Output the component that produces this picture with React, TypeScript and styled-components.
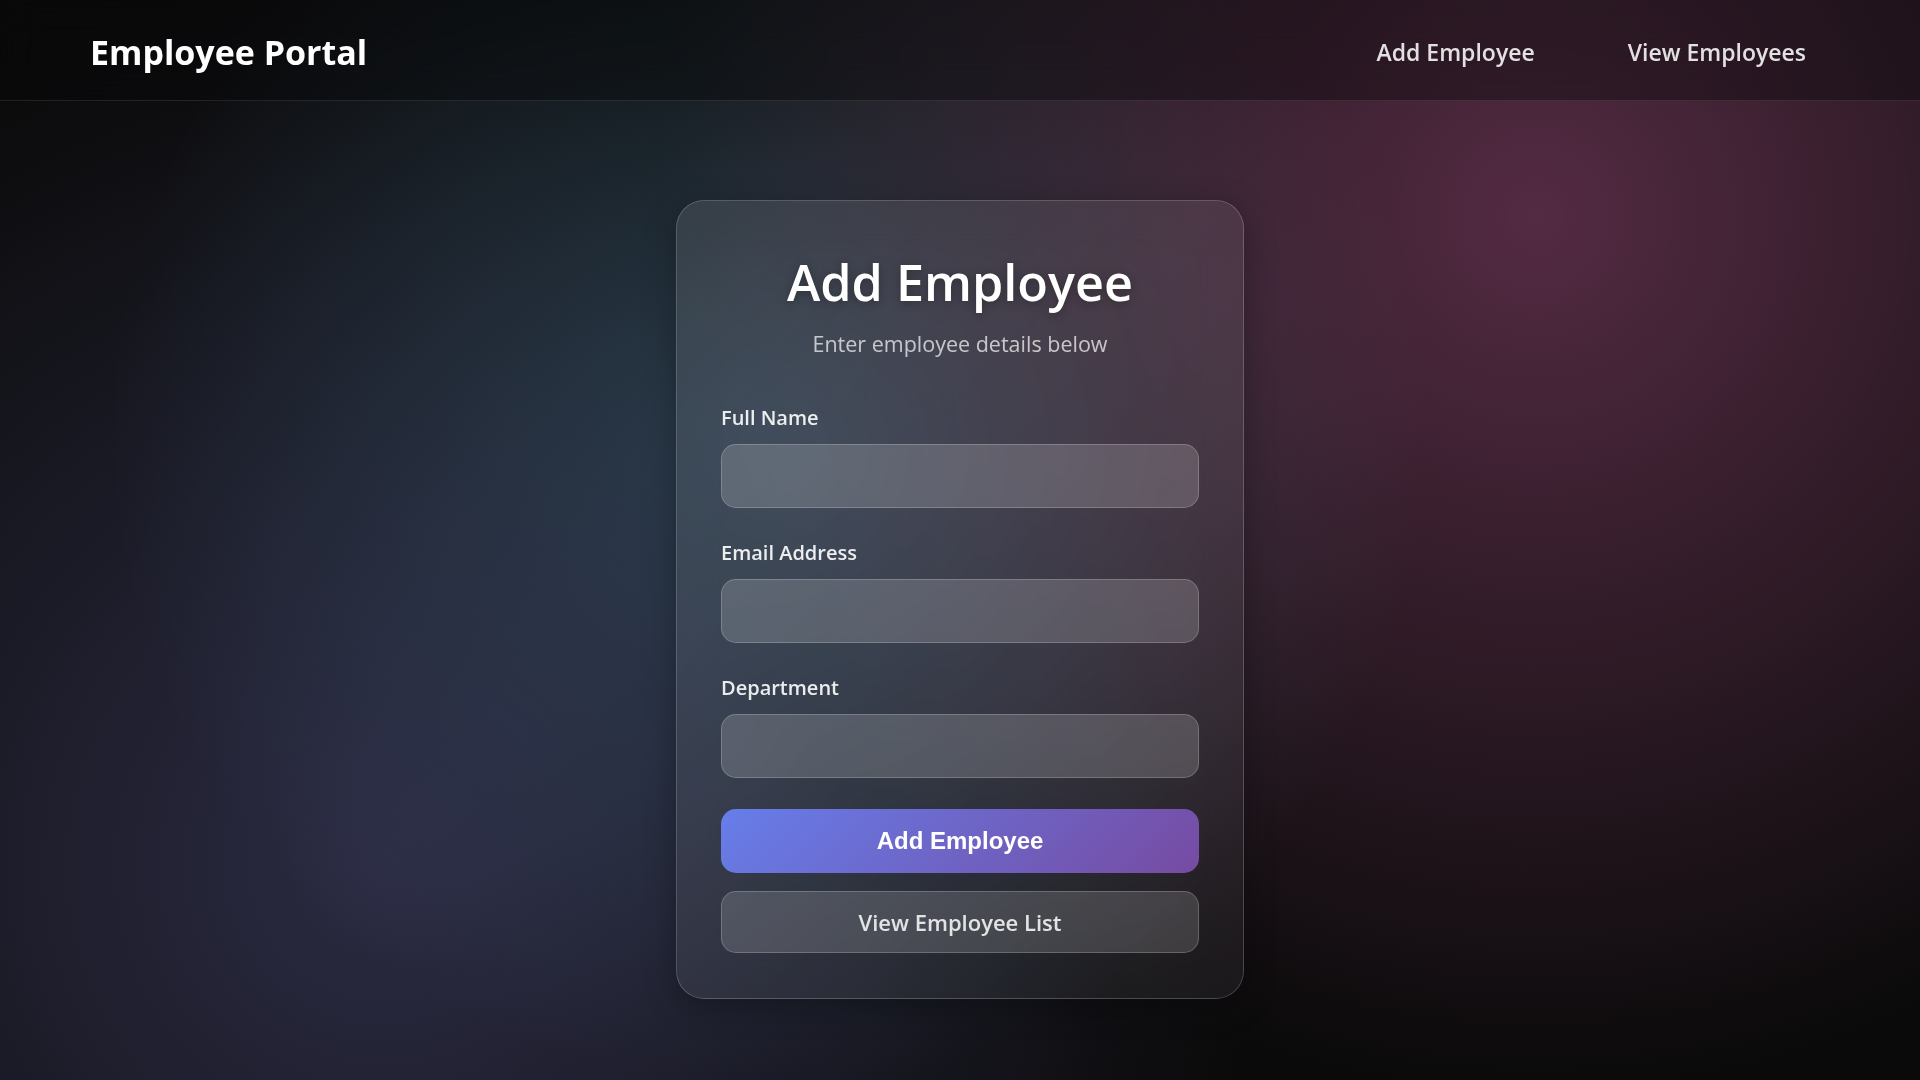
import React from "react";
import styled, { createGlobalStyle } from "styled-components";

const GlobalStyle = createGlobalStyle`
  *, *::before, *::after { box-sizing: border-box; }
  html, body { margin: 0; padding: 0; }
  body {
    font-family: "Open Sans", "Noto Sans", sans-serif;
    background: #0a0a0a;
    color: #ffffff;
  }
`;

const Page = styled.div`
  min-height: 100vh;
  display: flex;
  flex-direction: column;
  background:
    radial-gradient(circle at 20% 80%, rgba(120, 119, 198, 0.3) 0%, transparent 50%),
    radial-gradient(circle at 80% 20%, rgba(255, 119, 198, 0.3) 0%, transparent 50%),
    radial-gradient(circle at 40% 40%, rgba(120, 219, 255, 0.2) 0%, transparent 50%),
    #0a0a0a;
`;

const Header = styled.header`
  height: 101px;
  display: flex;
  align-items: center;
  justify-content: space-between;
  padding: 5px 90px 0;
  background: rgba(8, 8, 10, 0.4);
  backdrop-filter: blur(20px);
  border-bottom: 1px solid rgba(255, 255, 255, 0.1);
`;

const Brand = styled.div`
  font-size: 34px;
  font-weight: 700;
  color: #ffffff;
  line-height: 1.2;
`;

const Nav = styled.nav`
  display: flex;
  align-items: center;
  gap: 45px;
`;

const NavLink = styled.a`
  padding: 10px 24px;
  font-size: 23px;
  font-weight: 600;
  color: rgba(255, 255, 255, 0.87);
  text-decoration: none;
  line-height: 1.3;
`;

const Main = styled.main`
  flex: 1;
  display: flex;
  justify-content: center;
  align-items: flex-start;
  padding-top: 99px;
`;

const Card = styled.section`
  width: 568px;
  padding: 50px 44px 45px;
  border: 1px solid rgba(255, 255, 255, 0.18);
  border-radius: 28px;
  background: linear-gradient(135deg, rgba(255, 255, 255, 0.1) 0%, rgba(255, 255, 255, 0.05) 100%);
  backdrop-filter: blur(20px);
  box-shadow: 0 8px 32px rgba(0, 0, 0, 0.3);
`;

const Title = styled.h1`
  margin: 0;
  font-size: 50.3px;
  font-weight: 600;
  line-height: 62px;
  text-align: center;
  color: #ffffff;
  text-shadow: 0 2px 10px rgba(0, 0, 0, 0.3);
`;

const Subtitle = styled.p`
  margin: 16px 0 45px;
  font-size: 21.5px;
  line-height: 1.4;
  text-align: center;
  color: rgba(255, 255, 255, 0.7);
`;

const Form = styled.form`
  display: flex;
  flex-direction: column;
  gap: 31px;
`;

const Field = styled.div`
  display: flex;
  flex-direction: column;
  gap: 12px;
`;

const Label = styled.label`
  font-size: 20px;
  font-weight: 600;
  line-height: 28px;
  color: rgba(255, 255, 255, 0.9);
`;

const Input = styled.input`
  height: 64px;
  width: 100%;
  padding: 0 20px;
  border: 1px solid rgba(255, 255, 255, 0.2);
  border-radius: 15px;
  background: rgba(255, 255, 255, 0.17);
  color: #ffffff;
  font-family: inherit;
  font-size: 20px;
  outline: none;
`;

const Actions = styled.div`
  display: flex;
  flex-direction: column;
  gap: 18px;
`;

const PrimaryButton = styled.button`
  height: 64px;
  width: 100%;
  border: none;
  border-radius: 15px;
  background: linear-gradient(135deg, #667eea 0%, #764ba2 100%);
  color: #ffffff;
  font-family: "Liberation Sans", Arial, sans-serif;
  font-size: 24px;
  font-weight: 700;
  cursor: pointer;
`;

const SecondaryButton = styled.a`
  height: 62px;
  display: flex;
  align-items: center;
  justify-content: center;
  border: 1px solid rgba(255, 255, 255, 0.2);
  border-radius: 15px;
  background: rgba(255, 255, 255, 0.15);
  color: rgba(255, 255, 255, 0.85);
  font-size: 22px;
  font-weight: 600;
  text-decoration: none;
`;

export default function App() {
  return (
    <>
      <GlobalStyle />
      <Page>
        <Header>
          <Brand>Employee Portal</Brand>
          <Nav>
            <NavLink href="#">Add Employee</NavLink>
            <NavLink href="#">View Employees</NavLink>
          </Nav>
        </Header>
        <Main>
          <Card>
            <Title>Add Employee</Title>
            <Subtitle>Enter employee details below</Subtitle>
            <Form onSubmit={(e) => e.preventDefault()}>
              <Field>
                <Label htmlFor="name">Full Name</Label>
                <Input id="name" type="text" />
              </Field>
              <Field>
                <Label htmlFor="email">Email Address</Label>
                <Input id="email" type="email" />
              </Field>
              <Field>
                <Label htmlFor="dept">Department</Label>
                <Input id="dept" type="text" />
              </Field>
              <Actions>
                <PrimaryButton type="submit">Add Employee</PrimaryButton>
                <SecondaryButton href="#">View Employee List</SecondaryButton>
              </Actions>
            </Form>
          </Card>
        </Main>
      </Page>
    </>
  );
}
